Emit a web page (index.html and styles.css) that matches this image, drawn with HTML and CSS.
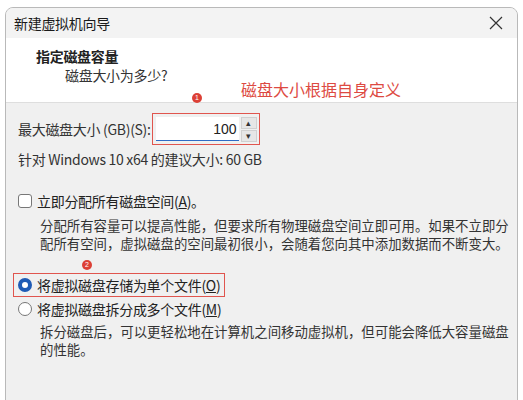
FILE: index.html
```html
<!DOCTYPE html>
<html lang="zh-CN">
<head>
    <meta charset="UTF-8">
    <title>新建虚拟机向导</title>
    <link rel="stylesheet" href="styles.css">
</head>
<body>
    <div class="window">
        <div class="titlebar">
            <span class="title">新建虚拟机向导</span>
            <svg class="close" width="14" height="14" viewBox="0 0 14 14">
                <path d="M1 1L13 13M13 1L1 13" stroke="#333" stroke-width="1.2" fill="none"/>
            </svg>
        </div>
        <div class="header">
            <div class="heading">指定磁盘容量</div>
            <div class="subheading">磁盘大小为多少?</div>
            <div class="note">磁盘大小根据自身定义</div>
            <span class="badge badge-one">1</span>
        </div>
        <div class="content">
            <div class="size-row">
                <label class="size-label">最大磁盘大小 (GB)(S):</label>
                <div class="highlight spin-box">
                    <div class="spin-field">100</div>
                    <div class="spin-buttons">
                        <span class="spin-btn">&#9652;</span>
                        <span class="spin-btn">&#9662;</span>
                    </div>
                </div>
            </div>
            <div class="hint">针对 Windows 10 x64 的建议大小: 60 GB</div>

            <div class="option check-row">
                <span class="checkbox"></span>
                <span>立即分配所有磁盘空间(<u>A</u>)。</span>
            </div>
            <p class="desc">分配所有容量可以提高性能，但要求所有物理磁盘空间立即可用。如果不立即分<br>配所有空间，虚拟磁盘的空间最初很小，会随着您向其中添加数据而不断变大。</p>

            <div class="radio-group">
                <span class="badge badge-two">2</span>
                <div class="option highlight radio-row">
                    <span class="radio checked"></span>
                    <span>将虚拟磁盘存储为单个文件(<u>O</u>)</span>
                </div>
                <div class="option radio-row">
                    <span class="radio"></span>
                    <span>将虚拟磁盘拆分成多个文件(<u>M</u>)</span>
                </div>
            </div>
            <p class="desc desc-tight">拆分磁盘后，可以更轻松地在计算机之间移动虚拟机，但可能会降低大容量磁盘<br>的性能。</p>
        </div>
    </div>
</body>
</html>
```

FILE: styles.css
```css
body {
    margin: 0;
    background: #fff;
    font-family: "Noto Sans CJK SC", "Noto Sans", sans-serif;
    font-size: 14px;
    letter-spacing: -0.3px;
    color: #222;
    overflow: hidden;
}
.window {
    margin: 7px 5px 0 5px;
    height: 420px;
    border: 1px solid #b9b9b9;
    border-radius: 8px 8px 0 0;
    background: #f0f0f0;
    overflow: hidden;
    display: flex;
    flex-direction: column;
}
.titlebar {
    height: 30px;
    flex-shrink: 0;
    background: #f3f3f3;
    display: flex;
    align-items: center;
    justify-content: space-between;
    padding: 0 14px 0 8px;
}
.title {
    color: #1a1a1a;
}
.close {
    display: block;
}
.header {
    position: relative;
    height: 65px;
    flex-shrink: 0;
    background: #fff;
    border-bottom: 1px solid #dedede;
    padding: 8px 0 0 30px;
    box-sizing: border-box;
}
.heading {
    font-weight: bold;
    line-height: 20px;
}
.subheading {
    padding-left: 29px;
    line-height: 18px;
    color: #333;
}
.note {
    position: absolute;
    left: 235px;
    top: 41px;
    font-size: 16px;
    letter-spacing: 0;
    color: #dd4a42;
    line-height: 20px;
}
.badge {
    position: absolute;
    width: 10px;
    height: 10px;
    border-radius: 50%;
    background: #dc4036;
    color: #fff;
    font-size: 7px;
    letter-spacing: 0;
    line-height: 10px;
    text-align: center;
    font-family: "Liberation Sans", sans-serif;
}
.badge-one {
    left: 186px;
    top: 55px;
}
.badge-two {
    left: 69px;
    top: -13px;
}
.content {
    padding: 8px 0 0 12px;
}
.size-row {
    display: flex;
    align-items: center;
    gap: 1px;
    height: 35px;
}
.size-label {
    color: #333;
}
.highlight {
    border: 1.5px solid #e0554e;
}
.spin-box {
    display: flex;
    align-items: stretch;
    gap: 2px;
    width: 108px;
    height: 32px;
    padding: 3px 2px 3px 3px;
    box-sizing: border-box;
}
.spin-field {
    flex: 1;
    background: #fff;
    border-bottom: 1.5px solid #2e6bc5;
    text-align: right;
    font-family: "Liberation Sans", sans-serif;
    font-size: 14px;
    letter-spacing: 0;
    line-height: 24px;
    padding-right: 2px;
}
.spin-buttons {
    width: 16px;
    display: flex;
    flex-direction: column;
    gap: 1px;
}
.spin-btn {
    flex: 1;
    background: #e6e6e6;
    border: 1px solid #d0d0d0;
    font-size: 9px;
    line-height: 10px;
    text-align: center;
    color: #333;
}
.hint {
    margin-top: 3px;
    line-height: 20px;
    color: #333;
}
.option {
    display: flex;
    align-items: center;
    gap: 5px;
    line-height: 20px;
    white-space: nowrap;
}
.check-row {
    margin-top: 22px;
}
.checkbox {
    width: 12px;
    height: 12px;
    border: 1px solid #777;
    border-radius: 3px;
    background: #fff;
}
.desc {
    margin: 5px 0 0 22px;
    font-size: 13.4px;
    letter-spacing: 0;
    white-space: nowrap;
    line-height: 18px;
    color: #333;
}
.desc-tight {
    margin-top: 2px;
}
.radio-group {
    position: relative;
    margin-top: 21px;
    margin-left: -5px;
}
.radio-row {
    width: 212px;
    height: 24px;
    box-sizing: border-box;
    padding-left: 4px;
}
.radio-row + .radio-row {
    height: 23px;
    border: 1.5px solid transparent;
}
.radio {
    width: 12px;
    height: 12px;
    border: 1px solid #777;
    border-radius: 50%;
    background: #fff;
    box-sizing: content-box;
    flex-shrink: 0;
}
.radio.checked {
    width: 6px;
    height: 6px;
    border: 4px solid #1f5bb5;
}
u {
    text-decoration: underline;
}
```
